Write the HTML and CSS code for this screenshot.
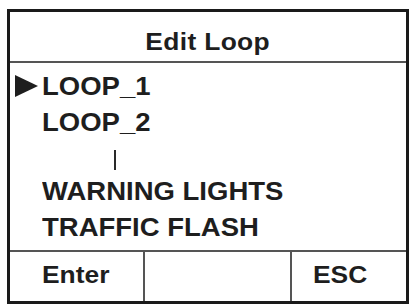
FILE: index.html
```html
<!DOCTYPE html>
<html>
<head>
<meta charset="utf-8">
<link rel="stylesheet" href="styles.css">
</head>
<body>
<div class="screen">
  <div class="header"><span class="t c">Edit Loop</span></div>
  <div class="list">
    <div class="row"><span class="mark"><svg width="23" height="22" viewBox="0 0 23 22"><polygon points="0,0 23,11 0,22" fill="#1e1e1e"/></svg></span><span class="t">LOOP_1</span></div>
    <div class="row"><span class="mark"></span><span class="t">LOOP_2</span></div>
    <div class="row gap"><span class="pipe"></span></div>
    <div class="row"><span class="mark"></span><span class="t">WARNING LIGHTS</span></div>
    <div class="row"><span class="mark"></span><span class="t">TRAFFIC FLASH</span></div>
  </div>
  <div class="footer">
    <div class="cell enter"><span class="t">Enter</span></div>
    <div class="cell mid"></div>
    <div class="cell esc"><span class="t">ESC</span></div>
  </div>
</div>
</body>
</html>
```
FILE: styles.css
```css
html, body {
  margin: 0;
  padding: 0;
  background: #ffffff;
}
body {
  font-family: "Liberation Sans", Arial, sans-serif;
  font-weight: bold;
  color: #1e1e1e;
}
.t {
  display: inline-block;
  transform: scaleX(1.1);
  transform-origin: left center;
}
.t.c {
  transform-origin: center center;
}
.screen {
  margin: 9px 0 0 7px;
  width: 402px;
  height: 295px;
  box-sizing: border-box;
  border: 3px solid #1a1a1a;
  display: flex;
  flex-direction: column;
}
.header {
  height: 51px;
  box-sizing: border-box;
  padding-top: 15px;
  border-bottom: 2px solid #555;
  font-size: 24px;
  line-height: 30px;
  letter-spacing: 0.3px;
  text-align: center;
}
.list {
  height: 189px;
  box-sizing: border-box;
  padding: 5px 0 0 5px;
  border-bottom: 2px solid #555;
  font-size: 25px;
}
.row {
  height: 36px;
  line-height: 36px;
  display: flex;
  align-items: center;
}
.row.gap {
  height: 33px;
  align-items: flex-start;
}
.mark {
  width: 27px;
  height: 22px;
  display: flex;
}
.pipe {
  display: block;
  width: 2px;
  height: 20px;
  margin: 10px 0 0 99px;
  background: #2a2a2a;
}
.footer {
  flex: 1;
  display: grid;
  grid-template-columns: 133px 147px 1fr;
  font-size: 24px;
  line-height: 46px;
}
.cell {
  box-sizing: border-box;
}
.enter {
  padding-left: 32px;
}
.mid {
  border-left: 2px solid #555;
}
.esc {
  border-left: 2px solid #555;
  padding-left: 21px;
}
```
